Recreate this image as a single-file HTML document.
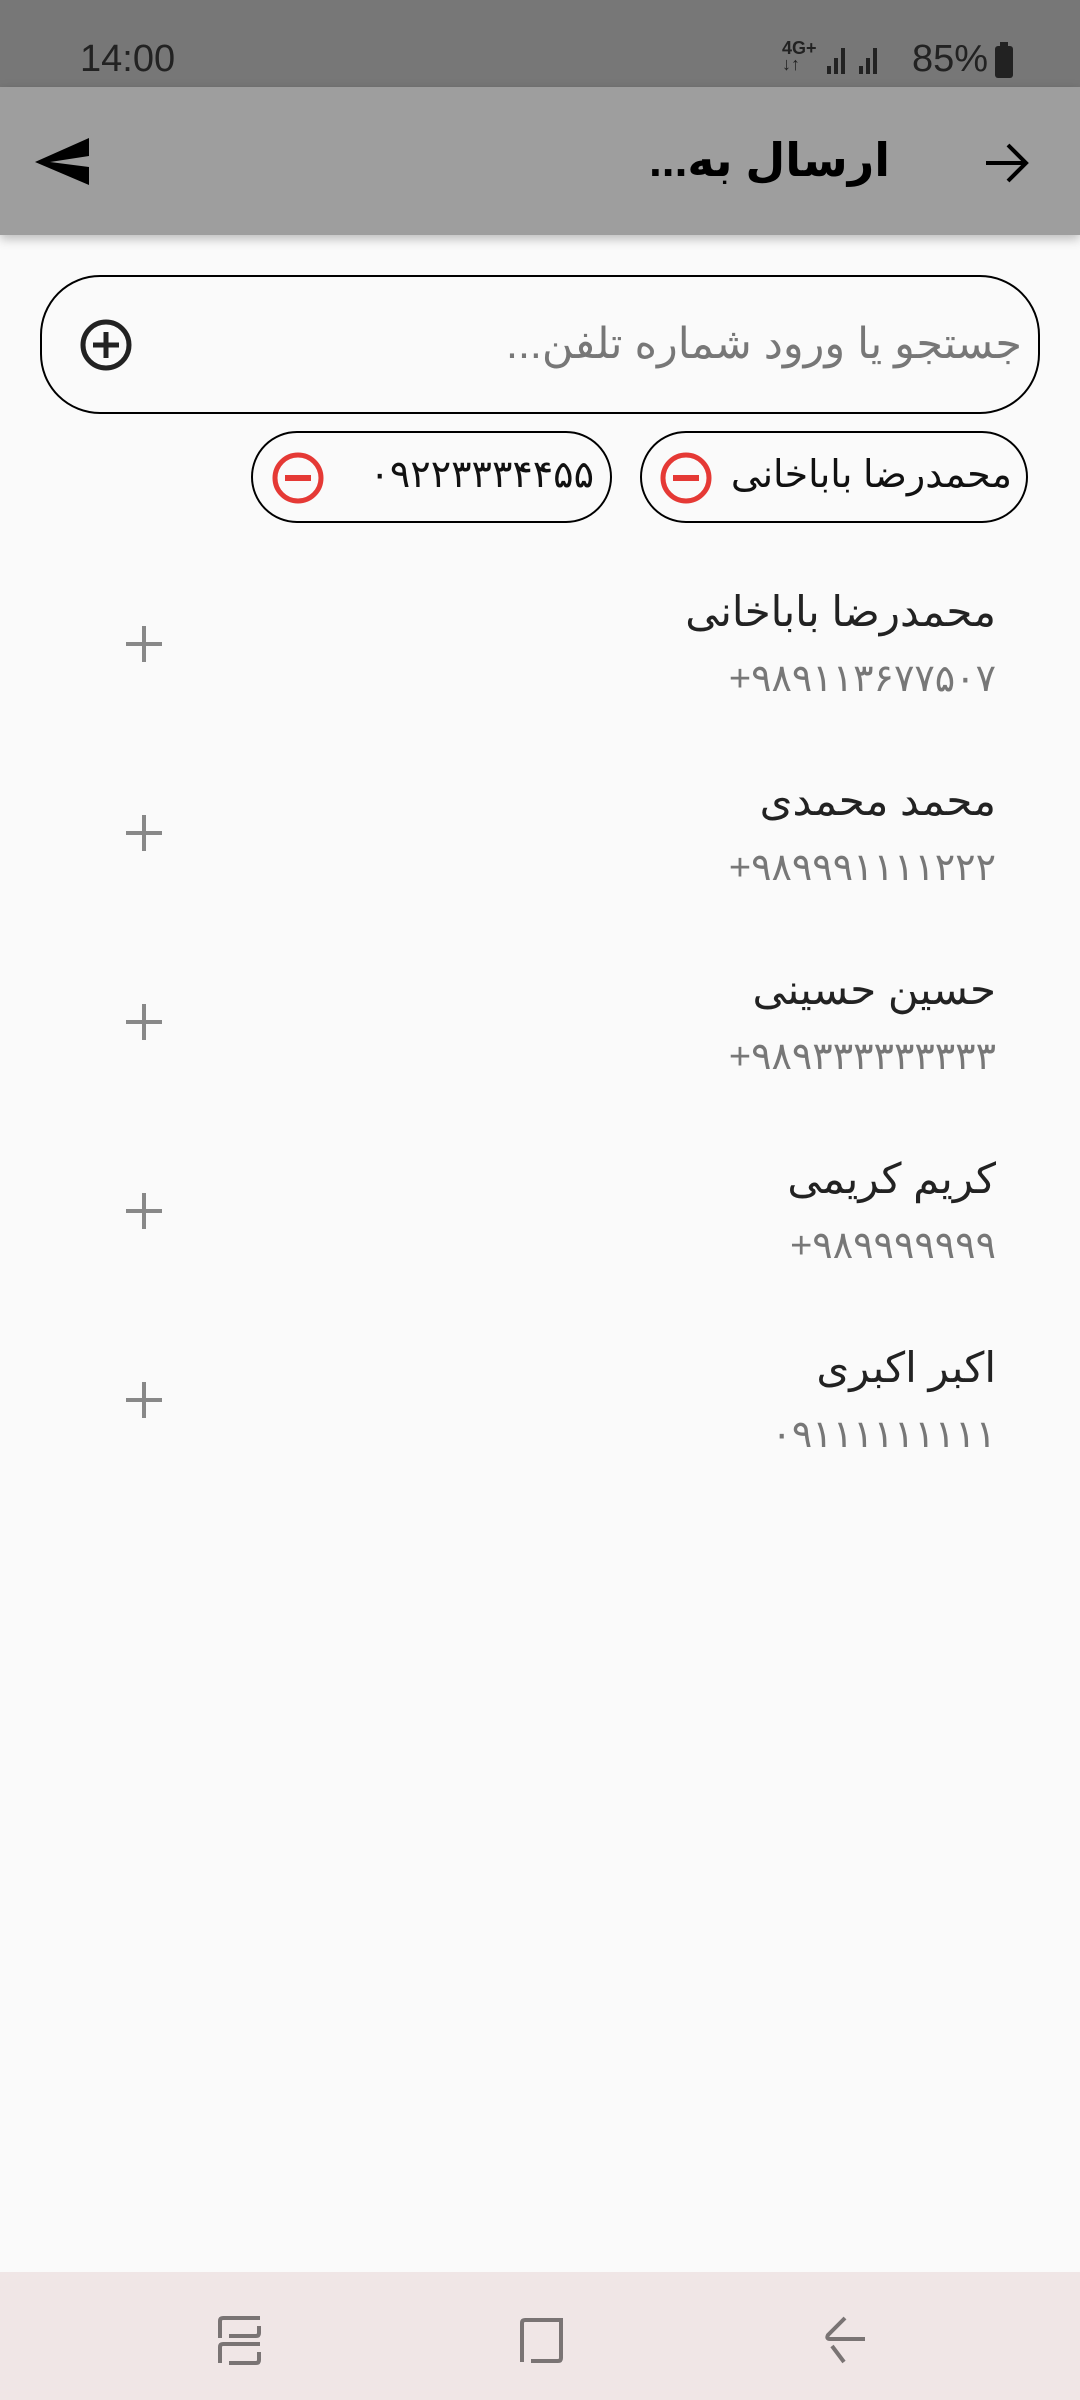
<!DOCTYPE html>
<html><head><meta charset="utf-8"><style>
*{margin:0;padding:0;box-sizing:border-box}
body{width:1080px;height:2400px;background:#fafafa;position:relative;overflow:hidden;font-family:"Liberation Sans","DejaVu Sans","Noto Sans CJK SC",sans-serif}
.abs{position:absolute}
.status{left:0;top:0;width:1080px;height:87px;background:#777}
.bar{left:0;top:87px;width:1080px;height:148px;background:#9e9e9e;box-shadow:0 4px 10px rgba(0,0,0,.25)}
.rtl{direction:rtl;white-space:nowrap}
.name{right:84px;font-size:42px;color:#222;line-height:50px}
.phone{right:84px;font-size:38px;color:#777;line-height:46px;direction:ltr;white-space:nowrap;text-align:right}
.plus{left:124px;width:40px;height:40px}
.chip{border:2px solid #000;border-radius:46px;height:92px;top:431px}
</style></head><body>
<div class="abs status"></div>
<div class="abs" style="left:80px;top:38px;font-size:38px;color:#222">14:00</div>
<div class="abs" style="left:782px;top:40px;font-size:18px;color:#222;line-height:16px;font-weight:bold">4G+<br>↓↑</div>
<svg class="abs" style="left:825px;top:40px" width="70" height="36"><g fill="#222"><rect x="2" y="26" width="4" height="8"/><rect x="9" y="18" width="4" height="16"/><rect x="16" y="8" width="4" height="26"/><rect x="34" y="26" width="4" height="8"/><rect x="41" y="18" width="4" height="16"/><rect x="48" y="8" width="4" height="26"/></g></svg>
<div class="abs" style="left:912px;top:38px;font-size:38px;color:#222">85%</div>
<svg class="abs" style="left:994px;top:42px" width="20" height="36"><rect x="6" y="0" width="8" height="5" fill="#222"/><rect x="1" y="4" width="18" height="32" rx="3" fill="#222"/></svg>
<div class="abs bar"></div>
<svg class="abs" style="left:30px;top:130px" width="70" height="60"><polygon points="5,32 59,8 59,26 20,32 59,37 59,55" fill="#000"/></svg>
<div class="abs rtl" style="right:190px;top:130px;font-size:46px;font-weight:bold;color:#000;line-height:60px">ارسال به...</div>
<svg class="abs" style="left:982px;top:140px" width="50" height="46"><path d="M4 23H44M26 5L44 23L26 41" stroke="#000" stroke-width="4" fill="none"/></svg>
<div class="abs" style="left:40px;top:275px;width:1000px;height:139px;border:2.5px solid #000;border-radius:60px"></div>
<div class="abs rtl" style="right:58px;top:316px;font-size:43px;color:#777;line-height:56px">جستجو یا ورود شماره تلفن...</div>
<svg class="abs" style="left:79px;top:318px" width="54" height="54"><circle cx="27" cy="27" r="23" stroke="#222" stroke-width="5" fill="none"/><path d="M27 14V40M14 27H40" stroke="#222" stroke-width="5"/></svg>
<div class="abs chip" style="left:640px;width:388px"></div>
<div class="abs rtl" style="right:68px;top:450px;font-size:38px;color:#111;line-height:50px">محمدرضا باباخانی</div>
<svg class="abs" style="left:659px;top:451px" width="54" height="54"><circle cx="27" cy="27" r="23" stroke="#e53935" stroke-width="5" fill="none"/><path d="M14 27H40" stroke="#e53935" stroke-width="6"/></svg>
<div class="abs chip" style="left:251px;width:361px"></div>
<div class="abs rtl" style="right:486px;top:450px;font-size:38px;color:#111;line-height:50px">۰۹۲۲۳۳۳۴۴۵۵</div>
<svg class="abs" style="left:271px;top:451px" width="54" height="54"><circle cx="27" cy="27" r="23" stroke="#e53935" stroke-width="5" fill="none"/><path d="M14 27H40" stroke="#e53935" stroke-width="6"/></svg>

<div class="abs rtl name" style="top:587px">محمدرضا باباخانی</div>
<div class="abs phone" style="top:656px">+۹۸۹۱۱۳۶۷۷۵۰۷</div>
<svg class="abs plus" style="top:624px"><path d="M20 2V38M2 20H38" stroke="#888" stroke-width="4"/></svg>

<div class="abs rtl name" style="top:776px">محمد محمدی</div>
<div class="abs phone" style="top:845px">+۹۸۹۹۹۱۱۱۱۲۲۲</div>
<svg class="abs plus" style="top:813px"><path d="M20 2V38M2 20H38" stroke="#888" stroke-width="4"/></svg>

<div class="abs rtl name" style="top:965px">حسین حسینی</div>
<div class="abs phone" style="top:1034px">+۹۸۹۳۳۳۳۳۳۳۳۳</div>
<svg class="abs plus" style="top:1002px"><path d="M20 2V38M2 20H38" stroke="#888" stroke-width="4"/></svg>

<div class="abs rtl name" style="top:1154px">کریم کریمی</div>
<div class="abs phone" style="top:1223px">+۹۸۹۹۹۹۹۹۹</div>
<svg class="abs plus" style="top:1191px"><path d="M20 2V38M2 20H38" stroke="#888" stroke-width="4"/></svg>

<div class="abs rtl name" style="top:1343px">اکبر اکبری</div>
<div class="abs phone" style="top:1412px">۰۹۱۱۱۱۱۱۱۱۱</div>
<svg class="abs plus" style="top:1380px"><path d="M20 2V38M2 20H38" stroke="#888" stroke-width="4"/></svg>

<div class="abs" style="left:0;top:2272px;width:1080px;height:128px;background:#f0e6e6"></div>
<svg class="abs" style="left:0;top:2300px" width="1080" height="80"><g stroke="#7a7474" stroke-width="4" fill="none" stroke-linecap="butt"><path d="M220 38V21Q220 18 223 18H260M229 36H256Q259 36 259 33V26"/><path d="M220 63V47Q220 44 223 44H260M229 63H256Q259 63 259 60V52"/><path d="M522 62V23Q522 20 525 20H561V58Q561 61 558 61H531"/><path d="M845 18L828 35Q826 39 830 39H865M832 46L844 62"/></g></svg>
</body></html>
